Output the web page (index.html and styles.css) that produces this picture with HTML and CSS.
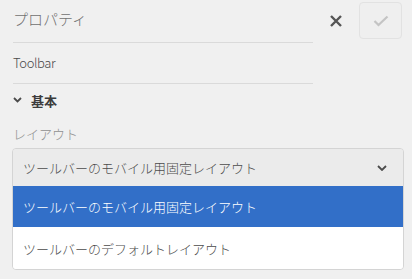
FILE: index.html
```html
<!DOCTYPE html>
<html lang="ja">
<head>
<meta charset="utf-8">
<link rel="stylesheet" href="styles.css">
</head>
<body>
<div class="panel">
  <div class="top">
    <div class="top-left">
      <div class="title">プロパティ</div>
      <div class="name">Toolbar</div>
    </div>
    <div class="actions">
      <button class="close" aria-label="close">
        <svg width="14" height="14" viewBox="0 0 14 14"><path d="M2 2 L12 12 M12 2 L2 12" stroke="#555" stroke-width="2.4" stroke-linecap="butt"/></svg>
      </button>
      <button class="done" aria-label="done">
        <svg width="16" height="12" viewBox="0 0 16 12"><path d="M1.5 6 L5.5 10 L14.5 1.5" fill="none" stroke="#c4c4c4" stroke-width="2.2"/></svg>
      </button>
    </div>
  </div>
  <div class="section">
    <svg class="chev" width="9" height="6" viewBox="0 0 9 6"><path d="M1 1 L4.5 4.5 L8 1" fill="none" stroke="#4b4b4b" stroke-width="1.8"/></svg>
    <span>基本</span>
  </div>
  <div class="label">レイアウト</div>
  <div class="select">
    <div class="select-value">
      <span>ツールバーのモバイル用固定レイアウト</span>
      <svg width="10" height="6" viewBox="0 0 10 6"><path d="M1 1 L5 5 L9 1" fill="none" stroke="#4b4b4b" stroke-width="1.8"/></svg>
    </div>
    <ul class="list">
      <li class="item selected">ツールバーのモバイル用固定レイアウト</li>
      <li class="item">ツールバーのデフォルトレイアウト</li>
    </ul>
  </div>
</div>
</body>
</html>
```

FILE: styles.css
```css
html, body {
  margin: 0;
  padding: 0;
  background: #f0f0f0;
}
body {
  font-family: "Noto Sans CJK JP", "Noto Sans", sans-serif;
  font-weight: 300;
  color: #4b4b4b;
}
.panel {
  padding: 0 10px 0 12px;
}
.top {
  display: flex;
}
.top-left {
  width: 300px;
  padding-left: 1px;
}
.title {
  height: 43px;
  box-sizing: border-box;
  border-bottom: 1px solid #dadada;
  font-size: 15px;
  line-height: 20px;
  padding-top: 9px;
  color: #707070;
}
.name {
  height: 41px;
  box-sizing: border-box;
  border-bottom: 1px solid #dadada;
  font-size: 13px;
  line-height: 18px;
  letter-spacing: -0.4px;
  padding-top: 11px;
  color: #4b4b4b;
}
.actions {
  flex: 1;
  display: flex;
  align-items: flex-start;
  justify-content: flex-end;
  padding-top: 2px;
}
.close {
  border: 0;
  background: none;
  padding: 0;
  width: 14px;
  height: 14px;
  margin-top: 12px;
  margin-right: 16px;
  display: flex;
}
.done {
  width: 43px;
  height: 37px;
  border: 1px solid #e2e2e2;
  border-radius: 4px;
  background: #efefef;
  display: flex;
  align-items: center;
  justify-content: center;
  padding: 0;
}
.section {
  display: flex;
  align-items: center;
  gap: 9px;
  padding-left: 1px;
  margin-top: 7px;
  height: 18px;
  font-size: 13px;
  font-weight: bold;
  color: #3c3c3c;
}
.chev {
  display: block;
}
.label {
  margin-top: 16px;
  padding-left: 1px;
  font-size: 13px;
  line-height: 18px;
  color: #8f8f8f;
}
.select {
  margin-top: 5px;
  width: 390px;
  border: 1px solid #d4d4d4;
  border-radius: 4px;
  overflow: hidden;
}
.select-value {
  height: 37px;
  box-sizing: border-box;
  display: flex;
  align-items: center;
  justify-content: space-between;
  padding: 0 16px 0 10px;
  background: #ebebeb;
  font-size: 13px;
  color: #4b4b4b;
}
.list {
  list-style: none;
  margin: 0;
  padding: 0;
  background: #fff;
}
.item {
  height: 41px;
  display: flex;
  align-items: center;
  padding-left: 10px;
  font-size: 13px;
  color: #4b4b4b;
}
.item.selected {
  background: #326fc8;
  color: #fff;
}
.item + .item {
  height: 42px;
}
```
